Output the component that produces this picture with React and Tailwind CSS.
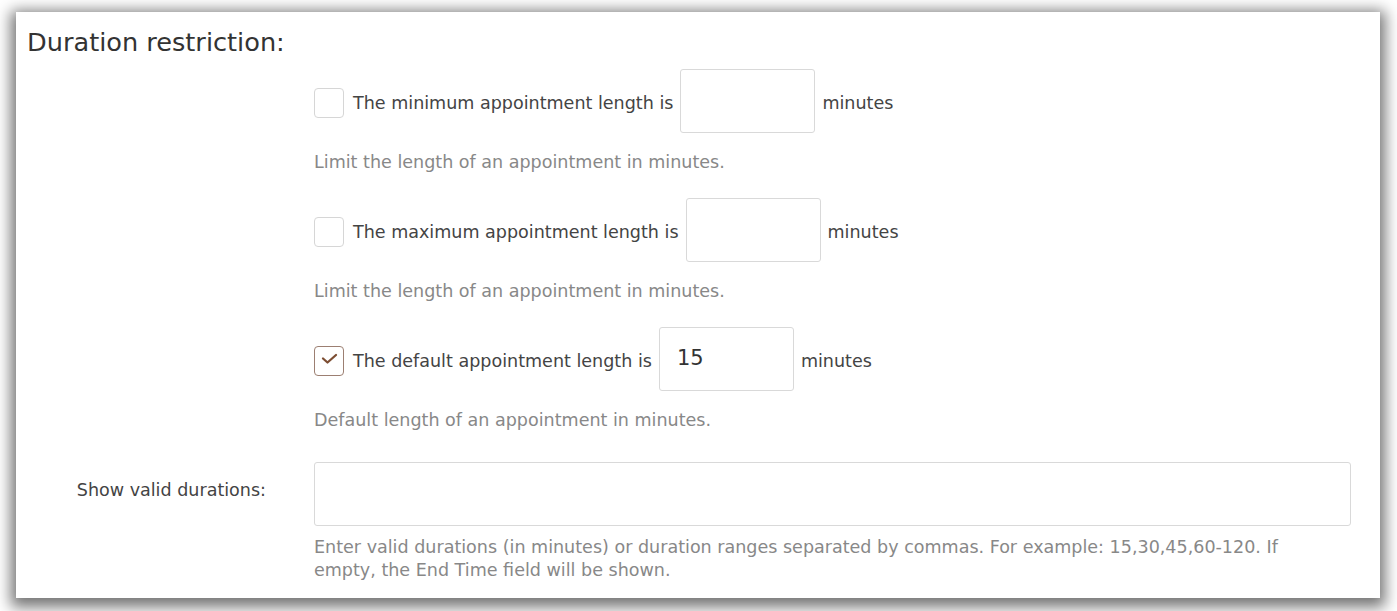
import { useState } from "react";

function Check({ checked }) {
  return (
    <span
      className={
        "relative mt-[3px] h-[30px] w-[30px] shrink-0 rounded-[4px] border bg-white " +
        (checked ? "border-[#9c7f72]" : "border-[#d6d6d6]")
      }
    >
      {checked && (
        <svg className="absolute -top-px -left-px" width="30" height="30" viewBox="0 0 30 30" fill="none">
          <path d="M9 12.5l4.5 4 8.5-7.5" stroke="#7d4e33" strokeWidth="2.3" strokeLinecap="round" strokeLinejoin="round" />
        </svg>
      )}
    </span>
  );
}

function LengthRow({ label, value, checked, help, first }) {
  return (
    <div className={first ? "mt-[12px]" : "mt-[26px]"}>
      <div className="flex h-16 items-center">
        <Check checked={checked} />
        <span className="mt-[5px] ml-[9px] text-[#444]">{label}</span>
        <span className="ml-[7px] flex h-16 w-[135px] items-center rounded-[3px] border border-[#d9d9d9] px-[17px] text-[21px] text-[#333]">
          {value}
        </span>
        <span className="mt-[5px] ml-[7px] text-[#444]">minutes</span>
      </div>
      <p className="mt-[19px] h-5 leading-5 text-[#888]">{help}</p>
    </div>
  );
}

export default function App() {
  const [rows] = useState([
    { label: "The minimum appointment length is", value: "", checked: false, help: "Limit the length of an appointment in minutes." },
    { label: "The maximum appointment length is", value: "", checked: false, help: "Limit the length of an appointment in minutes." },
    { label: "The default appointment length is", value: "15", checked: true, help: "Default length of an appointment in minutes." },
  ]);

  return (
    <div className="min-h-[611px] bg-white pt-[12px] pr-[17px] pb-[14px] pl-[16px]" style={{ fontFamily: '"DejaVu Sans", Verdana, sans-serif' }}>
      <div className="bg-white pt-[15px] pb-[16px] text-[17.55px] shadow-[0_4px_14px_5px_rgba(0,0,0,0.55)]">
        <h2 className="pl-[11px] text-[25.6px] leading-[30px] text-[#333]">Duration restriction:</h2>
        <div className="pl-[298px]">
          {rows.map((r, i) => (
            <LengthRow key={r.label} {...r} first={i === 0} />
          ))}
        </div>
        <div className="mt-[32px] flex">
          <div className="flex h-16 w-[298px] shrink-0 items-center justify-end pr-[48px] pb-[8px] text-[#444]">Show valid durations:</div>
          <div className="mr-[29px] flex-1">
            <div className="h-16 rounded-[3px] border border-[#d9d9d9]" />
            <p className="mt-[10px] leading-[23px] text-[#888]">
              Enter valid durations (in minutes) or duration ranges separated by commas. For example: 15,30,45,60-120. If
              <br />
              empty, the End Time field will be shown.
            </p>
          </div>
        </div>
      </div>
    </div>
  );
}
